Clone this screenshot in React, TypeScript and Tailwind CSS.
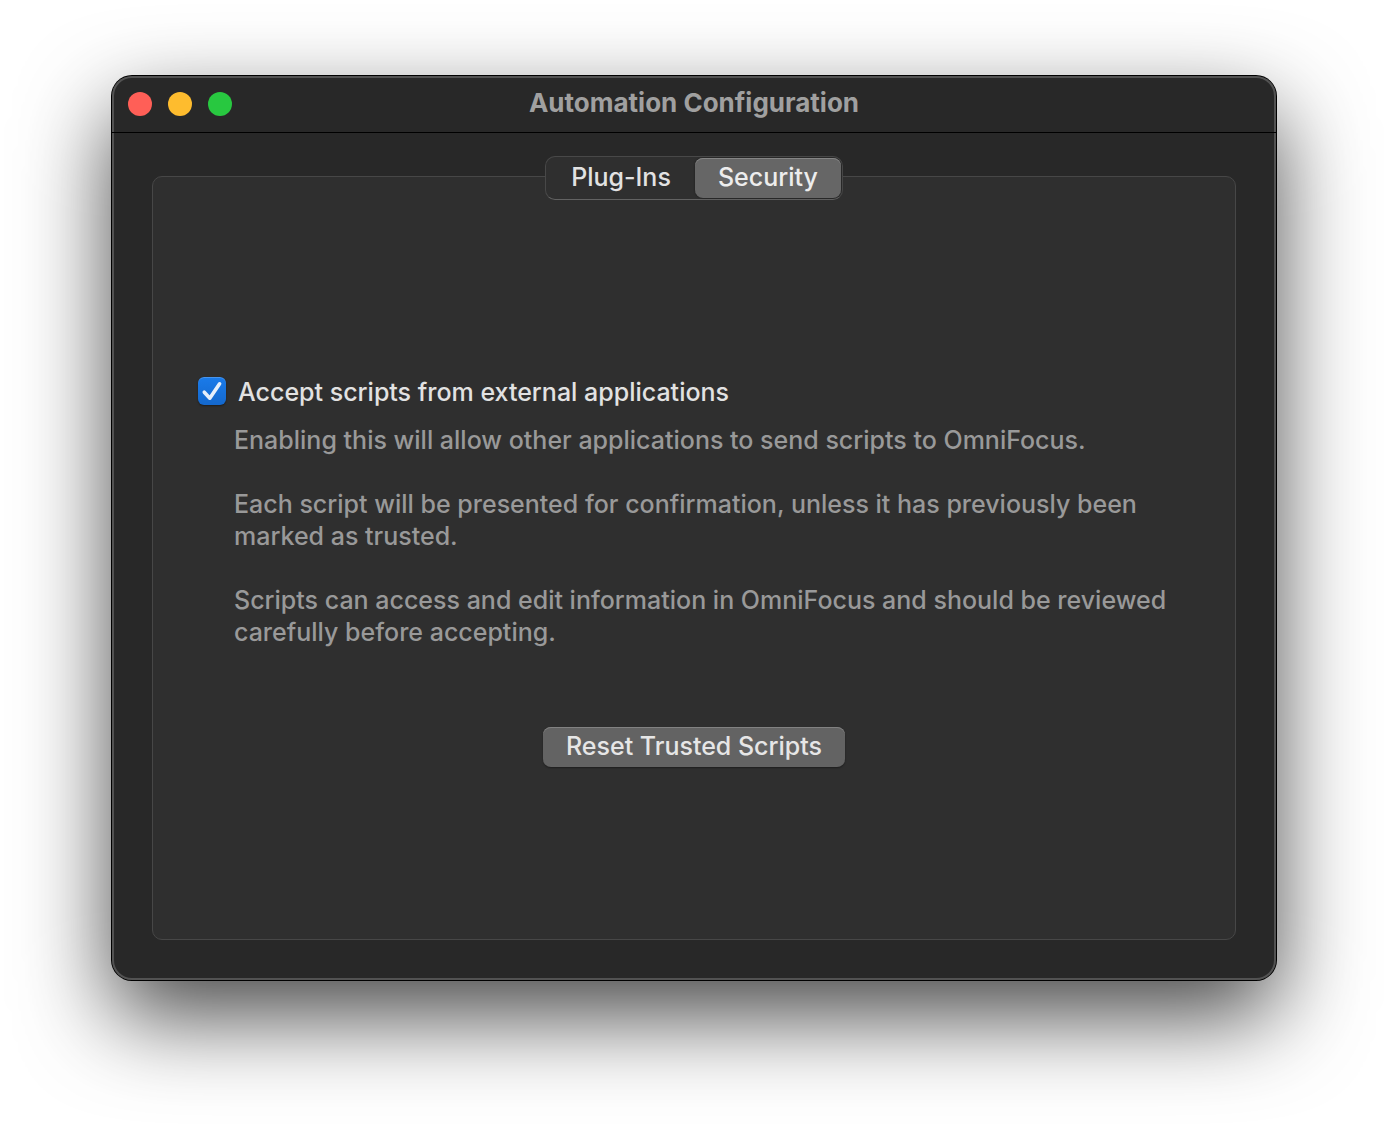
import { useState } from 'react';

const TABS = ['Plug-Ins', 'Security'];

function TrafficLights() {
  return (
    <div className="flex gap-4">
      <button type="button" aria-label="Close" className="size-6 rounded-full bg-[#ff5f57]" />
      <button type="button" aria-label="Minimize" className="size-6 rounded-full bg-[#febc2e]" />
      <button type="button" aria-label="Zoom" className="size-6 rounded-full bg-[#28c840]" />
    </div>
  );
}

function Checkbox({ label }: { label: string }) {
  const [checked, setChecked] = useState(true);
  return (
    <label className="flex items-start gap-3 text-[#e2e2e2]">
      <span className="mt-px grid size-7 shrink-0 place-items-center">
        <input
          type="checkbox"
          checked={checked}
          onChange={(e) => setChecked(e.target.checked)}
          className="col-start-1 row-start-1 size-7 appearance-none rounded-md bg-[#5a5a5a] shadow-[0_1px_2px_rgba(0,0,0,0.4),inset_0_1px_0_rgba(255,255,255,0.2)] checked:bg-linear-to-b checked:from-[#1a7bea] checked:to-[#1468cd]"
        />
        {checked && (
          <svg viewBox="0 0 28 28" className="pointer-events-none col-start-1 row-start-1 size-7" fill="none">
            <path d="M6.3 15.2 L11.8 21.2 L21.6 6.8" stroke="#e6effb" strokeWidth="3.6" strokeLinecap="round" strokeLinejoin="round" />
          </svg>
        )}
      </span>
      {label}
    </label>
  );
}

export default function App() {
  const [active, setActive] = useState('Security');
  return (
    <div className="min-h-screen overflow-hidden bg-white px-28 pt-19 pb-37 font-['Inter',sans-serif] text-[25px] leading-8 font-medium">
      <main className="rounded-[20px] bg-[#282828] shadow-[inset_0_0_0_2px_#525252,0_0_0_1px_#000,0_36px_90px_rgba(0,0,0,0.72)]">
        <header className="grid h-14 grid-cols-[1fr_auto_1fr] items-center px-4">
          <TrafficLights />
          <h1 className="pb-0.5 text-[26px] leading-8 font-bold text-[#a0a0a0]">Automation Configuration</h1>
        </header>
        <hr className="border-black" />
        <div className="px-10 pt-[23px] pb-10">
          <div role="tablist" className="relative mx-auto flex h-11 w-fit rounded-[10px] border border-[#484848] border-b-[#626262] bg-[#2f2f2f] p-px">
            {TABS.map((tab) => (
              <button
                key={tab}
                type="button"
                role="tab"
                aria-selected={active === tab}
                onClick={() => setActive(tab)}
                className={
                  active === tab
                    ? 'rounded-lg bg-[#666666] px-[23px] pb-0.5 text-[#ededed] shadow-[inset_0_1px_0_#858585,0_0_2px_rgba(0,0,0,0.5)]'
                    : 'rounded-lg px-6 pb-0.5 text-[#e2e2e2]'
                }
              >
                {tab}
              </button>
            ))}
          </div>
          <section className="-mt-6 flex flex-col rounded-[10px] border border-[#474747] bg-[#2f2f2f] px-[45px] pt-[199px] pb-43">
            <Checkbox label="Accept scripts from external applications" />
            <div className="mt-4 flex flex-col gap-8 pl-9 text-[#999999]">
              <p>Enabling this will allow other applications to send scripts to OmniFocus.</p>
              <p>Each script will be presented for confirmation, unless it has previously been marked as trusted.</p>
              <p>Scripts can access and edit information in OmniFocus and should be reviewed carefully before accepting.</p>
            </div>
            <button
              type="button"
              className="mt-[79px] h-10 self-center rounded-lg bg-[#636363] px-[23px] pb-0.5 text-[#e6e6e6] shadow-[inset_0_1px_0_#828282,0_1px_2px_rgba(0,0,0,0.4)]"
            >
              Reset Trusted Scripts
            </button>
          </section>
        </div>
      </main>
    </div>
  );
}
